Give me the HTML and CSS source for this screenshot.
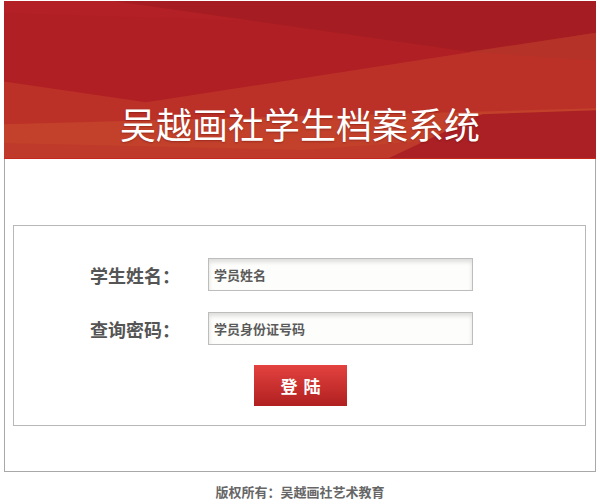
FILE: index.html
```html
<!DOCTYPE html>
<html lang="zh-CN">
<head>
<meta charset="utf-8">
<title>吴越画社学生档案系统</title>
<link rel="stylesheet" href="styles.css">
</head>
<body>
<div class="page">
  <header class="header">
    <svg class="header-bg" viewBox="0 0 592 158" preserveAspectRatio="none" aria-hidden="true">
      <rect x="0" y="0" width="592" height="158" fill="#b01f24"/>
      <polygon points="0,0 110,0 250,20 0,12" fill="#b52227" opacity="0.6"/>
      <polygon points="110,0 592,0 592,32 465,51" fill="#a51d22"/>
      <polygon points="0,81 142,102 592,32 592,158 0,158" fill="#bb3128"/>
      <polygon points="465,51 592,32 592,60" fill="#b2332a" opacity="0.7"/>
      <polygon points="0,124 592,108 592,158 0,158" fill="#c3412b"/>
      <polygon points="0,143 300,150 592,128 592,158 0,158" fill="#bf3a2a"/>
      <polygon points="385,158 478,114 592,110 592,158" fill="#aa2025"/>
    </svg>
    <h1 class="title">吴越画社学生档案系统</h1>
  </header>
  <main class="main">
    <form class="login-box">
      <div class="row">
        <label class="label" for="name">学生姓名：</label>
        <input class="field" id="name" type="text" placeholder="学员姓名">
      </div>
      <div class="row">
        <label class="label" for="pwd">查询密码：</label>
        <input class="field" id="pwd" type="text" placeholder="学员身份证号码">
      </div>
      <div class="actions">
        <button class="btn" type="button">登陆</button>
      </div>
    </form>
  </main>
  <footer class="footer">版权所有：吴越画社艺术教育</footer>
</div>
</body>
</html>
```
FILE: styles.css
```css
* { box-sizing: border-box; }
html, body {
  margin: 0;
  padding: 0;
  background: #fff;
  font-family: "Noto Sans CJK SC", "Noto Sans", sans-serif;
}
.page {
  width: 592px;
  margin: 1px 0 0 4px;
}
.header {
  position: relative;
  height: 158px;
  border-bottom: 1px solid #c4281f;
  overflow: hidden;
}
.header-bg {
  position: absolute;
  left: 0;
  top: 0;
  width: 100%;
  height: 100%;
  display: block;
}
.title {
  position: relative;
  margin: 0;
  padding-top: 104px;
  text-align: center;
  font-size: 36px;
  line-height: 36px;
  font-weight: 400;
  color: #fff;
  text-shadow: 0 1px 2px rgba(80, 0, 0, 0.35);
}
.main {
  border: 1px solid #a8a8a8;
  border-top: none;
  padding: 66px 9px 45px 8px;
}
.login-box {
  margin: 0;
  border: 1px solid #b8b8b8;
  padding: 32px 0 19px 76px;
  display: flex;
  flex-direction: column;
  gap: 21px;
}
.row {
  display: flex;
  align-items: center;
}
.label {
  width: 118px;
  font-size: 18px;
  font-weight: 700;
  color: #555;
  line-height: 24px;
}
.field {
  width: 265px;
  height: 33px;
  border: 1px solid #bdbdbd;
  background: #fdfdfb;
  box-shadow: inset 0 3px 4px rgba(0, 0, 0, 0.13);
  padding: 0 5px;
  font-family: "Noto Sans CJK SC", sans-serif;
  font-size: 13px;
  font-weight: 700;
  color: #555;
  outline: none;
}
.field::placeholder {
  color: #5a5a5a;
  opacity: 1;
}
.actions {
  margin-left: -76px;
  display: flex;
  justify-content: center;
  padding-left: 2px;
  margin-top: -1px;
}
.btn {
  width: 93px;
  height: 41px;
  border: none;
  background: linear-gradient(#e3423f, #b02020);
  color: #fff;
  font-family: "Noto Sans CJK SC", sans-serif;
  font-size: 17px;
  font-weight: 700;
  letter-spacing: 6px;
  text-indent: 6px;
  padding: 0;
  cursor: pointer;
}
.footer {
  text-align: center;
  font-size: 13px;
  font-weight: 700;
  color: #666;
  padding-top: 11px;
  line-height: 18px;
}
```
